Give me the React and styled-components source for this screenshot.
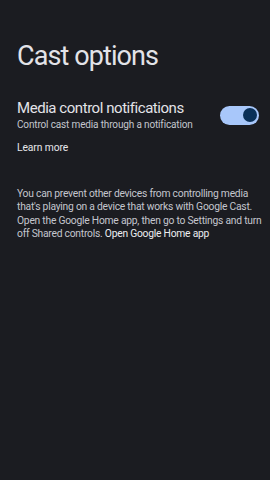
import React from "react";
import styled, { createGlobalStyle } from "styled-components";

const Global = createGlobalStyle`
  html, body { margin: 0; padding: 0; background: #1b1c21; }
  body { font-family: Roboto, "Noto Sans", sans-serif; -webkit-font-smoothing: antialiased; }
`;

const Page = styled.div`
  width: 270px;
  height: 480px;
  background: #1b1c21;
  box-sizing: border-box;
  padding: 40px 5px 0 17px;
  display: flex;
  flex-direction: column;
`;

const Title = styled.h1`
  margin: 0;
  font-weight: 400;
  font-size: 27px;
  line-height: 32px;
  color: #e3e3e8;
  letter-spacing: -0.9px;
`;

const SettingRow = styled.div`
  margin-top: 27px;
  margin-right: 6px;
  display: flex;
  align-items: center;
  justify-content: space-between;
`;

const SettingText = styled.div`
  display: flex;
  flex-direction: column;
`;

const SettingTitle = styled.div`
  font-size: 15px;
  line-height: 19px;
  color: #e3e3e8;
  letter-spacing: -0.45px;
`;

const SettingSub = styled.div`
  font-size: 10px;
  line-height: 14px;
  color: #c4c6ce;
  letter-spacing: -0.15px;
`;

const Toggle = styled.div`
  width: 39px;
  height: 19px;
  border-radius: 10px;
  background: #a8c7fa;
  display: flex;
  align-items: center;
  justify-content: flex-end;
  padding: 0 2.5px;
  box-sizing: border-box;
  margin-top: -1px;
`;

const Knob = styled.div`
  width: 14px;
  height: 14px;
  border-radius: 50%;
  background: #0a3058;
`;

const Link = styled.div`
  margin-top: 9px;
  font-size: 10.3px;
  line-height: 14px;
  color: #e6e6ea;
  letter-spacing: -0.1px;
`;

const Para = styled.p`
  margin: 32px 0 0;
  font-size: 10.3px;
  line-height: 13.3px;
  color: #c4c6ce;
  letter-spacing: -0.24px;
`;

const Inline = styled.span`
  color: #ececf0;
`;

export default function App() {
  return (
    <Page>
      <Global />
      <Title>Cast options</Title>
      <SettingRow>
        <SettingText>
          <SettingTitle>Media control notifications</SettingTitle>
          <SettingSub>Control cast media through a notification</SettingSub>
        </SettingText>
        <Toggle>
          <Knob />
        </Toggle>
      </SettingRow>
      <Link>Learn more</Link>
      <Para>
        You can prevent other devices from controlling media that's playing on a device that works with Google Cast. Open the Google Home app, then go to Settings and turn off Shared controls. <Inline>Open Google Home app</Inline>
      </Para>
    </Page>
  );
}
